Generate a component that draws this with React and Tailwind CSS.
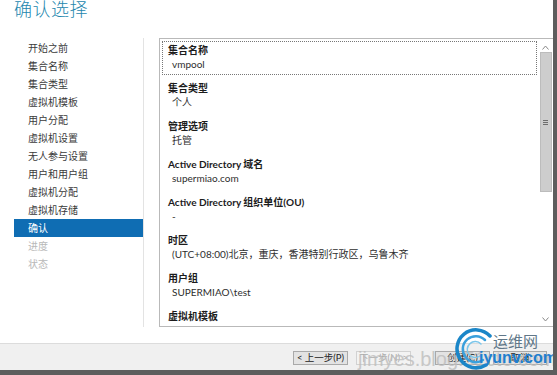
import React from 'react';

const steps = [
  { name: '开始之前' },
  { name: '集合名称' },
  { name: '集合类型' },
  { name: '虚拟机模板' },
  { name: '用户分配' },
  { name: '虚拟机设置' },
  { name: '无人参与设置' },
  { name: '用户和用户组' },
  { name: '虚拟机分配' },
  { name: '虚拟机存储' },
  { name: '确认', active: true },
  { name: '进度', disabled: true },
  { name: '状态', disabled: true },
];

const details = [
  { label: '集合名称', value: 'vmpool' },
  { label: '集合类型', value: '个人' },
  { label: '管理选项', value: '托管' },
  { label: 'Active Directory 域名', value: 'supermiao.com' },
  { label: 'Active Directory 组织单位(OU)', value: '-' },
  { label: '时区', value: '(UTC+08:00)北京，重庆，香港特别行政区，乌鲁木齐' },
  { label: '用户组', value: 'SUPERMIAO\\test' },
  { label: '虚拟机模板', value: '' },
];

const font = { fontFamily: 'Lato, "Noto Sans CJK SC", sans-serif' };

function Button({ children, disabled, className = '' }) {
  return (
    <div
      className={`h-[14px] flex items-center justify-center border text-[9.5px] leading-none ${
        disabled ? 'border-[#d2d2d2] bg-[#f3f3f3] text-[#aaaaaa]' : 'border-[#a9a9a9] bg-[#e3e3e3] text-[#222]'
      } ${className}`}
    >
      {children}
    </div>
  );
}

export default function App() {
  return (
    <div
      className="relative w-[557px] h-[375px] overflow-hidden bg-white flex flex-col border-r-[4px] border-b-[5px] border-[#5d5d5d]"
      style={font}
    >
      {/* Title */}
      <div className="h-[38px] pl-[14px]">
        <h1 className="text-[18px] leading-[20px] -mt-[1px] font-light text-[#2487ae] tracking-[0.5px]">确认选择</h1>
      </div>

      <div className="flex h-[305px]">
        {/* Steps */}
        <div className="w-[144px] pl-[14px] border-r border-[#e3e3e3] pt-[1px] h-[289px]">
          {steps.map((s) => (
            <div
              key={s.name}
              className={`h-[18px] pl-[14px] flex items-center text-[10px] ${
                s.active ? 'bg-[#0f6db3] text-white' : s.disabled ? 'text-[#b8b8b8]' : 'text-[#3a3a3a]'
              }`}
            >
              {s.name}
            </div>
          ))}
        </div>

        {/* Summary list */}
        <div className="ml-[15px] flex-1 h-[289px] border border-[#b9b9b9] border-r-0 flex">
          <div className="flex-1 pt-[2px] pl-[2px] pr-[1px] overflow-hidden">
            {details.map((d, i) => (
              <div
                key={d.label}
                className={
                  i === 0
                    ? 'h-[34px] mb-[4px] border border-dotted border-[#777] pl-[5px] pt-[1px]'
                    : 'h-[38px] pl-[6px] pt-[2px]'
                }
              >
                <div className="text-[10px] leading-[14px] font-bold text-[#1c1c1c] whitespace-nowrap">{d.label}</div>
                <div className="text-[10px] leading-[14px] pl-[4px] text-[#2e2e2e] whitespace-nowrap">{d.value}</div>
              </div>
            ))}
          </div>

          {/* Scrollbar */}
          <div className="w-[15px] flex flex-col items-center pt-[3px] pb-[2px] bg-white">
            <div className="h-[10px] flex items-center justify-center">
              <svg width="7" height="5" viewBox="0 0 7 5">
                <path d="M0.5 4.5 L3.5 1 L6.5 4.5" fill="none" stroke="#8a8a8a" strokeWidth="1" />
              </svg>
            </div>
            <div className="w-[12px] h-[140px] bg-[#cdcdcd] border border-[#bcbcbc] flex flex-col items-center justify-center gap-[1px]">
              <div className="w-[5px] h-px bg-[#6e6e6e]" />
              <div className="w-[5px] h-px bg-[#6e6e6e]" />
              <div className="w-[5px] h-px bg-[#6e6e6e]" />
            </div>
            <div className="flex-1" />
            <div className="h-[10px] flex items-center justify-center">
              <svg width="7" height="5" viewBox="0 0 7 5">
                <path d="M0.5 0.5 L3.5 4 L6.5 0.5" fill="none" stroke="#8a8a8a" strokeWidth="1" />
              </svg>
            </div>
          </div>
        </div>
      </div>

      {/* Footer */}
      <div className="flex-1 bg-[#f0f0f0] border-t border-[#dcdcdc] flex items-center pl-[293px] gap-[8px] pt-[2px]">
        <Button className="w-[55px]">&lt; 上一步(P)</Button>
        <Button className="w-[55px]" disabled>下一步(N) &gt;</Button>
        <Button className="w-[55px] ml-[16px]">创建(C)</Button>
        <Button className="w-[54px] -ml-[5px]">取消</Button>
      </div>

      {/* Watermarks */}
      <div className="absolute left-[358px] top-[349px] text-[20px] leading-[20px] font-light text-[#bdbdbd] opacity-80 pointer-events-none whitespace-nowrap" style={{ fontFamily: '"Liberation Sans", sans-serif' }}>
        jimyes.blog.51cto.com
      </div>
      <div className="absolute left-[452px] top-[327px] pointer-events-none">
        <svg width="44" height="44" viewBox="0 0 44 44">
          <path d="M38 9 A19 19 0 1 0 34 38" fill="none" stroke="#1a86c8" strokeWidth="3.5" strokeLinecap="round" />
          <path d="M33 13 A13 13 0 1 0 31 33" fill="none" stroke="#3aa0dc" strokeWidth="2.5" strokeLinecap="round" />
          <path d="M29 17 A8 8 0 1 0 28 29" fill="none" stroke="#7cc6ea" strokeWidth="1.5" strokeLinecap="round" />
        </svg>
      </div>
      <div className="absolute left-[493px] top-[332px] text-[15px] leading-[18px] text-[#607788] pointer-events-none" style={{ fontFamily: '"Noto Sans CJK SC", sans-serif' }}>
        运维网
      </div>
      <div className="absolute left-[479px] top-[350px] text-[16px] leading-[16px] font-bold text-[#1f7fcf] pointer-events-none" style={{ fontFamily: '"Liberation Sans", sans-serif' }}>
        iyunv.com
      </div>
    </div>
  );
}
